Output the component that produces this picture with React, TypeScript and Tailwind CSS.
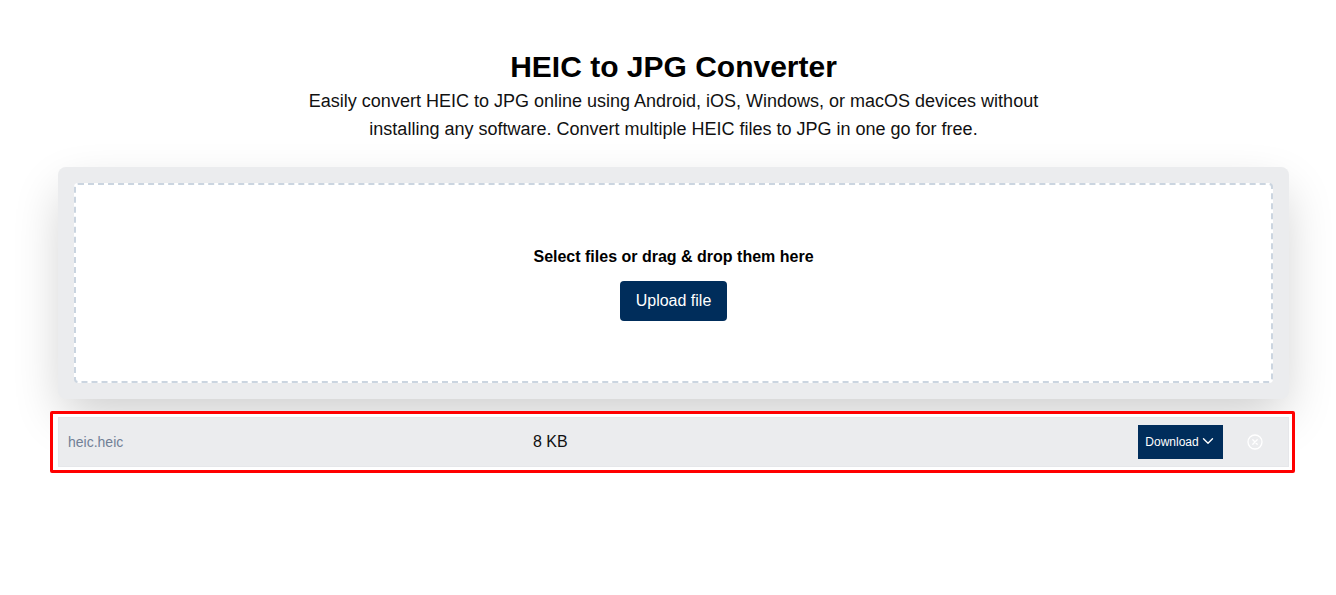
import { ChevronDown } from "lucide-react";

export default function App() {
  return (
    <div className="min-h-[595px] bg-white font-['Liberation_Sans',Arial,sans-serif] text-black overflow-hidden">
      {/* Header edge */}
      <div className="h-0 shadow-[0_0_14px_rgba(0,0,0,0.2)]" />

      {/* Title */}
      <div className="mx-[58px] w-[1231px] flex flex-col items-center pt-[48px]">
        <h1 className="text-[30px] leading-[38px] font-bold">HEIC to JPG Converter</h1>
        <p className="w-[760px] mt-[1px] text-center text-lg leading-7 text-[#111]">
          Easily convert HEIC to JPG online using Android, iOS, Windows, or macOS devices without installing any software. Convert multiple HEIC files to JPG in one go for free.
        </p>
      </div>

      {/* Upload box */}
      <div className="mx-[58px] w-[1231px] mt-[24px] p-4 bg-[#ebecee] rounded-lg shadow-[0_20px_50px_-5px_rgba(0,0,0,0.2)]">
        <div className="h-[200px] flex flex-col items-center justify-center bg-white border-2 border-dashed border-[#cbd5e0] rounded">
          <p className="text-base leading-6 font-bold">Select files or drag &amp; drop them here</p>
          <button className="mt-[12px] w-[107px] h-10 bg-[#002d5b] rounded-sm text-white text-base">Upload file</button>
        </div>
      </div>

      {/* File row */}
      <div className="relative mx-[50px] w-[1245px] mt-3 h-[62px] border-[3px] border-[#ff0000] rounded-[2px] bg-white p-[3px] pl-[5px] pr-[3px]">
        <div className="h-[50px] w-[1231px] flex items-center bg-[#ebecee] border border-[#e6e7ea]">
          <span className="w-[474px] pl-[9px] text-sm text-[#718096]">heic.heic</span>
          <span className="text-base text-[#111]">8 KB</span>
          <button className="ml-auto flex items-center justify-center pl-[1px] w-[85px] h-[34px] bg-[#002d5b] text-white text-xs font-normal">
            Download
            <ChevronDown size={18} strokeWidth={1.8} className="mb-[2px]" />
          </button>
          <div className="w-[65px] flex justify-center pr-[2px]">
            <svg width="16" height="16" viewBox="0 0 16 16" fill="none" stroke="#fff" strokeWidth="1.3" strokeLinecap="round">
              <circle cx="8" cy="8" r="7" />
              <path d="M5.8 5.8l4.4 4.4M10.2 5.8l-4.4 4.4" />
            </svg>
          </div>
        </div>
      </div>
    </div>
  );
}
